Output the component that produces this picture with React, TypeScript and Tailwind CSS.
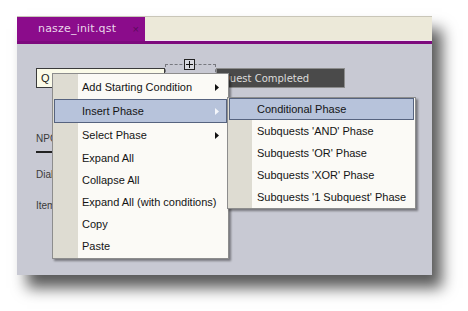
import React from "react";

type Item = { label: string; h: number; arrow?: boolean; active?: boolean };

const mainItems: Item[] = [
  { label: "Add Starting Condition", h: 24, arrow: true },
  { label: "Insert Phase", h: 24, arrow: true, active: true },
  { label: "Select Phase", h: 24, arrow: true },
  { label: "Expand All", h: 22 },
  { label: "Collapse All", h: 22 },
  { label: "Expand All (with conditions)", h: 22 },
  { label: "Copy", h: 22 },
  { label: "Paste", h: 22 },
];

const subItems: Item[] = [
  { label: "Conditional Phase", h: 22, active: true },
  { label: "Subquests 'AND' Phase", h: 22 },
  { label: "Subquests 'OR' Phase", h: 22 },
  { label: "Subquests 'XOR' Phase", h: 22 },
  { label: "Subquests '1 Subquest' Phase", h: 22 },
];

function Arrow({ light }: { light?: boolean }) {
  return (
    <svg width="4" height="7" viewBox="0 0 4 7" className="ml-auto mr-[7px]">
      <path d="M0 0 L4 3.5 L0 7 Z" fill={light ? "#f4f6fb" : "#111"} />
    </svg>
  );
}

function MenuRow({ item }: { item: Item }) {
  return (
    <div
      className={
        "flex items-center pl-[27px] mx-px border " +
        (item.active ? "border-[#56637f] bg-[#b7c3db]" : "border-transparent")
      }
      style={{ height: item.h }}
    >
      <span className="text-[11px] text-[#141414] leading-none">{item.label}</span>
      {item.arrow && <Arrow light={item.active} />}
    </div>
  );
}

export default function App() {
  return (
    <div className="w-[468px] h-[311px] bg-white overflow-hidden font-['Liberation_Sans',Arial,sans-serif]">
      <div className="relative ml-[17px] mt-[16px] w-[415px] h-[259px] bg-[#c8c9d3] shadow-[10px_13px_14px_rgba(0,0,0,0.65)] flex flex-col">
        {/* tab bar */}
        <div className="flex h-[25px] bg-[#ece9d9] border-t border-[#c9c6b8]">
          <div className="w-[128px] bg-[#8b0c8b] flex items-center pl-[21px] pr-[6px]">
            <span className="text-[11px] text-[#ead6ea] font-['DejaVu_Sans',sans-serif] tracking-[0.2px]">
              nasze_init.qst
            </span>
            <span className="ml-auto text-[11px] text-[#5c0b5c]">×</span>
          </div>
          <div className="flex-1 flex flex-col justify-end">
            <div className="h-px bg-[#f3e6f3]" />
          </div>
        </div>
        <div className="h-[3px] bg-[#7d0a7d]" />

        {/* body */}
        <div className="flex-1 pl-[19px] pt-[20px]">
          <div className="flex items-end">
            <div className="w-[129px] h-[20px] bg-[#fbfbe9] border border-[#3a3a3a] flex items-center pl-[4px] overflow-hidden">
              <span className="text-[11px] text-[#222]">Q</span>
            </div>
            <div className="relative w-[51px] h-[24px] border-t border-x border-dashed border-[#77787f]">
              <div className="absolute left-[18px] -top-[6px] w-[11px] h-[11px] border border-[#222] bg-[#d8d9e0] flex items-center justify-center">
                <svg width="7" height="7" viewBox="0 0 7 7">
                  <path d="M3.5 0 V7 M0 3.5 H7" stroke="#111" strokeWidth="1" />
                </svg>
              </div>
            </div>
            <div className="w-[129px] h-[20px] bg-[#4a4a4a] border border-[#8c8c8c] flex items-center pl-[5px]">
              <span className="text-[10px] text-[#dcdcdc] font-['DejaVu_Sans',sans-serif]">Quest Completed</span>
            </div>
          </div>

          <div className="mt-[43px] text-[10px] text-[#3a3a3a]">NPC</div>
          <div className="mt-[5px] w-[40px] h-[2px] bg-[#222]" />
          <div className="mt-[14px] text-[10px] text-[#3a3a3a]">Dialog</div>
          <div className="mt-[16px] text-[10px] text-[#3a3a3a]">Items</div>
        </div>

        {/* context menu */}
        <div className="absolute left-[35px] top-[57px] w-[177px] py-px border border-[#8d8d8d] bg-[linear-gradient(to_right,#dedcd2_25px,#fbfaf6_25px)] shadow-[2px_2px_2px_rgba(0,0,0,0.4)]">
          {mainItems.map((it) => (
            <MenuRow key={it.label} item={it} />
          ))}
        </div>

        {/* submenu */}
        <div className="absolute left-[210px] top-[81px] w-[189px] border border-[#8d8d8d] bg-[linear-gradient(to_right,#dedcd2_24px,#fbfaf6_24px)] shadow-[2px_2px_2px_rgba(0,0,0,0.4)]">
          {subItems.map((it) => (
            <MenuRow key={it.label} item={it} />
          ))}
        </div>
      </div>
    </div>
  );
}
